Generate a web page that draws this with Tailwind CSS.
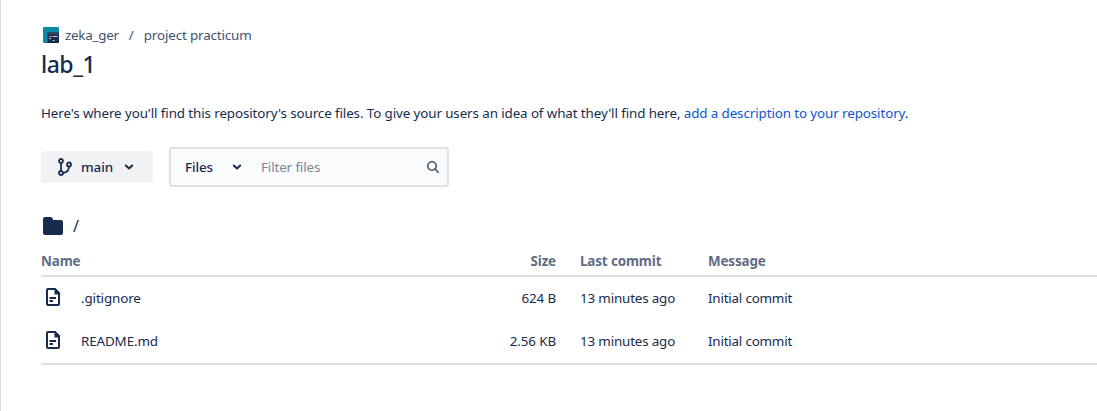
<!DOCTYPE html>
<html lang="en">
<head>
<meta charset="utf-8">
<title>lab_1</title>
<script src="https://cdn.jsdelivr.net/npm/@tailwindcss/browser@4"></script>
</head>
<body class="h-[411px] overflow-hidden border-l border-[#dcdcdc] bg-white pl-10 font-['Noto_Sans','Open_Sans',sans-serif] text-[13.4px] leading-5 tracking-[-0.125px] text-[#172b4d]">
<header class="pt-[25px]">
  <nav class="flex h-5 items-center text-[#42526e]">
    <svg class="ml-[2px] mr-[6px] size-4" viewBox="0 0 16 16"><rect width="16" height="16" rx="1" fill="#0b8ba3"/><path d="M4.500 5.500H16V15a1 1 0 0 1-1 1H4.500z" fill="#172b4d"/><path d="M4.500 5.500H16v2H4.500z" fill="#344563"/><path d="M6 9.500h3" stroke="#ff7452"/><path d="M9.500 9.500h5M6 11.500h2M9.500 13.500h2" stroke="#c1c7d0"/></svg>
    <a class="tracking-[-0.25px]">zeka_ger</a><span class="w-[25px] text-center">/</span><a class="tracking-[-0.15px]">project practicum</a>
  </nav>
  <h1 class="mt-[5px] text-[23px] font-medium leading-7 tracking-[-0.5px]">lab_1</h1>
</header>
<p class="mt-[25px] tracking-[-0.107px]">Here's where you'll find this repository's source files. To give your users an idea of what they'll find here, <a class="text-[#0c57d0]">add a description to your repository</a>.</p>
<div class="mt-6 flex h-10 items-center">
  <button class="flex h-8 w-28 items-center rounded-[3px] bg-[#f1f2f4] pl-4 font-medium">
    <svg class="h-[18px] w-4" viewBox="0 0 16 18" fill="none" stroke="#172b4d" stroke-width="1.800"><circle cx="4" cy="3" r="2"/><circle cx="4" cy="15" r="2"/><circle cx="12" cy="6.500" r="2"/><path d="M4 5v8M12 8.500c0 4-2.500 6-6 6.500"/></svg>
    <span class="ml-2 w-8">main</span>
    <svg class="ml-[11px] h-2 w-2.5" viewBox="0 0 10 8" fill="none" stroke="#172b4d" stroke-width="2" stroke-linecap="round" stroke-linejoin="round"><path d="M1.800 2.500 5 5.500l3.200-3"/></svg>
  </button>
  <div class="ml-4 flex h-10 w-[280px] items-center rounded-[3px] border-2 border-[#dfe1e6] bg-[#fafbfc] pl-[14px]">
    <span class="w-[47px] font-medium">Files</span>
    <svg class="h-2 w-2.5" viewBox="0 0 10 8" fill="none" stroke="#172b4d" stroke-width="2" stroke-linecap="round" stroke-linejoin="round"><path d="M1.800 2.500 5 5.500l3.200-3"/></svg>
    <span class="ml-3 h-6 w-px bg-white"></span>
    <span class="ml-[6px] w-[166px] text-[#7a869a]">Filter files</span>
    <svg class="size-3" viewBox="0 0 12 12" fill="none" stroke="#42526e" stroke-width="1.600" stroke-linecap="round"><circle cx="5" cy="5" r="4.200"/><path d="m8.200 8.200 3 3"/></svg>
  </div>
</div>
<div class="mt-[27px] flex h-6 items-center">
  <svg class="ml-[2px] h-[18px] w-5" viewBox="0 0 20 18"><path d="M0 2a2 2 0 0 1 2-2h5.500a2 2 0 0 1 1.800 1.100L10.300 3H18a2 2 0 0 1 2 2v11a2 2 0 0 1-2 2H2a2 2 0 0 1-2-2z" fill="#172b4d"/></svg>
  <span class="ml-[10px] text-base leading-6">/</span>
</div>
<div class="mt-[13px] border-b-2 border-[#dfe1e6]">
  <div class="grid h-[26px] grid-cols-[40px_375px_100px_24px_128px_1fr] border-b-2 border-[#dfe1e6] font-bold text-[#5e6c84]">
    <span>Name</span><span></span><span class="text-right">Size</span><span></span><span>Last commit</span><span>Message</span>
  </div>
  <div class="grid h-[43px] grid-cols-[40px_375px_100px_24px_128px_1fr] items-center pb-[2px]">
    <svg class="mb-px ml-[5px] h-[18px] w-[15px]" viewBox="0 0 15 18" fill="none" stroke="#172b4d" stroke-width="2"><path d="M2 1h7l4 4v11a1 1 0 0 1-1 1H2a1 1 0 0 1-1-1V2a1 1 0 0 1 1-1zM3.500 10H10M3.500 13H7"/><path d="M8.500 0 14 5.500v1H8.500z" fill="#172b4d" stroke="none"/></svg><span>.gitignore</span><span class="text-right">624 B</span><span></span><span class="tracking-[-0.17px]">13 minutes ago</span><span class="tracking-[-0.2px]">Initial commit</span>
  </div>
  <div class="grid h-[43px] grid-cols-[40px_375px_100px_24px_128px_1fr] items-center pb-[2px]">
    <svg class="mb-px ml-[5px] h-[18px] w-[15px]" viewBox="0 0 15 18" fill="none" stroke="#172b4d" stroke-width="2"><path d="M2 1h7l4 4v11a1 1 0 0 1-1 1H2a1 1 0 0 1-1-1V2a1 1 0 0 1 1-1zM3.500 10H10M3.500 13H7"/><path d="M8.500 0 14 5.500v1H8.500z" fill="#172b4d" stroke="none"/></svg><span>README.md</span><span class="text-right">2.56 KB</span><span></span><span class="tracking-[-0.17px]">13 minutes ago</span><span class="tracking-[-0.2px]">Initial commit</span>
  </div>
</div>
</body>
</html>
